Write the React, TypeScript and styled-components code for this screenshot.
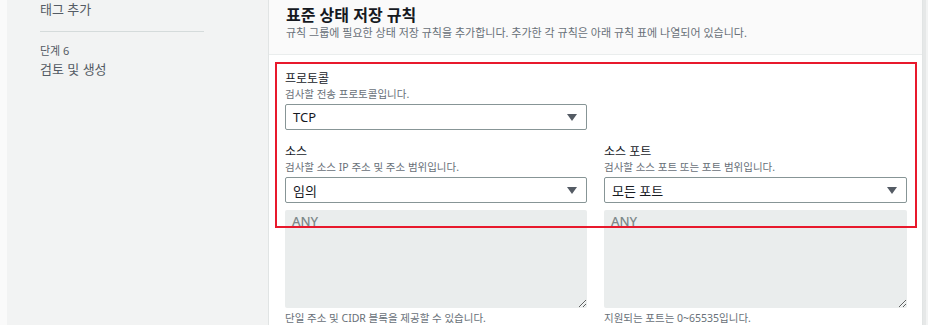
import React from "react";
import styled, { createGlobalStyle } from "styled-components";

const GlobalStyle = createGlobalStyle`
  html, body {
    margin: 0;
    padding: 0;
    background: #f2f3f3;
    font-family: "Noto Sans", "Noto Sans CJK KR", sans-serif;
  }
`;

export default function App() {
  return (
    <>
      <GlobalStyle />
      <Shell>
        <Sidebar>
          <NavItem>태그 추가</NavItem>
          <Divider />
          <StepLabel>단계 6</StepLabel>
          <NavItem>검토 및 생성</NavItem>
        </Sidebar>
        <Card>
          <CardHeader>
            <CardTitle>표준 상태 저장 규칙</CardTitle>
            <CardDesc>
              규칙 그룹에 필요한 상태 저장 규칙을 추가합니다. 추가한 각 규칙은 아래 규칙 표에 나열되어 있습니다.
            </CardDesc>
          </CardHeader>
          <CardBody>
            <Highlight />
            <FieldGrid>
              <Field>
                <Label>프로토콜</Label>
                <Hint>검사할 전송 프로토콜입니다.</Hint>
                <Select>
                  <span>TCP</span>
                  <Caret />
                </Select>
              </Field>
            </FieldGrid>
            <FieldGrid>
              <Field>
                <Label>소스</Label>
                <Hint>검사할 소스 IP 주소 및 주소 범위입니다.</Hint>
                <Select>
                  <span>임의</span>
                  <Caret />
                </Select>
                <TextArea placeholder="ANY" readOnly />
                <Help>단일 주소 및 CIDR 블록을 제공할 수 있습니다.</Help>
              </Field>
              <Field>
                <Label>소스 포트</Label>
                <Hint>검사할 소스 포트 또는 포트 범위입니다.</Hint>
                <Select>
                  <span>모든 포트</span>
                  <Caret />
                </Select>
                <TextArea placeholder="ANY" readOnly />
                <Help>지원되는 포트는 0~65535입니다.</Help>
              </Field>
            </FieldGrid>
          </CardBody>
        </Card>
        <RightGutter />
      </Shell>
    </>
  );
}

const Shell = styled.div`
  display: flex;
  height: 325px;
  overflow: hidden;
  border-left: 7px solid #fafafa;
`;

const Sidebar = styled.nav`
  width: 228px;
  flex-shrink: 0;
  padding: 0 0 0 33px;
  display: flex;
  flex-direction: column;
  color: #545b64;
`;

const NavItem = styled.div`
  font-size: 13px;
  line-height: 18px;
  color: #545b64;
`;

const Divider = styled.div`
  height: 1px;
  background: #d5dbdb;
  margin: 13px 0 12px;
  width: 164px;
`;

const StepLabel = styled.div`
  font-size: 11px;
  line-height: 14px;
  color: #545b64;
  margin-bottom: 2px;
`;

const Card = styled.section`
  width: 653px;
  flex-shrink: 0;
  background: #fff;
  border-left: 1px solid #e1e4e4;
  border-right: 1px solid #e1e4e4;
`;

const CardHeader = styled.header`
  background: #fafafa;
  border-bottom: 1px solid #eaeded;
  padding: 4px 17px 0;
  box-sizing: border-box;
  height: 55px;
`;

const CardTitle = styled.h2`
  margin: 0;
  font-size: 16px;
  line-height: 22px;
  font-weight: 700;
  color: #16191f;
`;

const CardDesc = styled.p`
  margin: 0;
  font-size: 11px;
  line-height: 14px;
  color: #687078;
`;

const CardBody = styled.div`
  position: relative;
  padding: 16px 16px 0 16px;
`;

const Highlight = styled.div`
  position: absolute;
  left: 6px;
  top: 7px;
  width: 638px;
  height: 162px;
  border: 2px solid #e8192c;
  pointer-events: none;
`;

const FieldGrid = styled.div`
  display: grid;
  grid-template-columns: 302px 303px;
  column-gap: 17px;
  & + & {
    margin-top: 14px;
  }
`;

const Field = styled.div`
  display: flex;
  flex-direction: column;
`;

const Label = styled.div`
  font-size: 12px;
  line-height: 16px;
  font-weight: 400;
  color: #16191f;
`;

const Hint = styled.div`
  font-size: 10.5px;
  line-height: 14px;
  color: #687078;
  margin-bottom: 3px;
`;

const Select = styled.div`
  height: 26px;
  box-sizing: border-box;
  border: 1px solid #879596;
  border-radius: 2px;
  display: flex;
  align-items: center;
  justify-content: space-between;
  padding: 0 9px 0 7px;
  font-size: 13px;
  color: #16191f;
`;

const Caret = styled.span`
  width: 0;
  height: 0;
  border-left: 5px solid transparent;
  border-right: 5px solid transparent;
  border-top: 7px solid #545b64;
`;

const TextArea = styled.textarea`
  margin-top: 7px;
  height: 98px;
  box-sizing: border-box;
  border: none;
  border-radius: 2px;
  background: #eaeded;
  padding: 2px 7px;
  font-family: inherit;
  font-size: 13px;
  font-weight: 500;
  color: #7d8889;
  resize: vertical;
  outline: none;
  &::placeholder {
    color: #7d8889;
    opacity: 1;
  }
`;

const Help = styled.div`
  margin-top: 3px;
  font-size: 10.5px;
  line-height: 14px;
  color: #687078;
`;

const RightGutter = styled.div`
  flex: 1;
  border-left: 3px solid #e6e8e8;
`;
